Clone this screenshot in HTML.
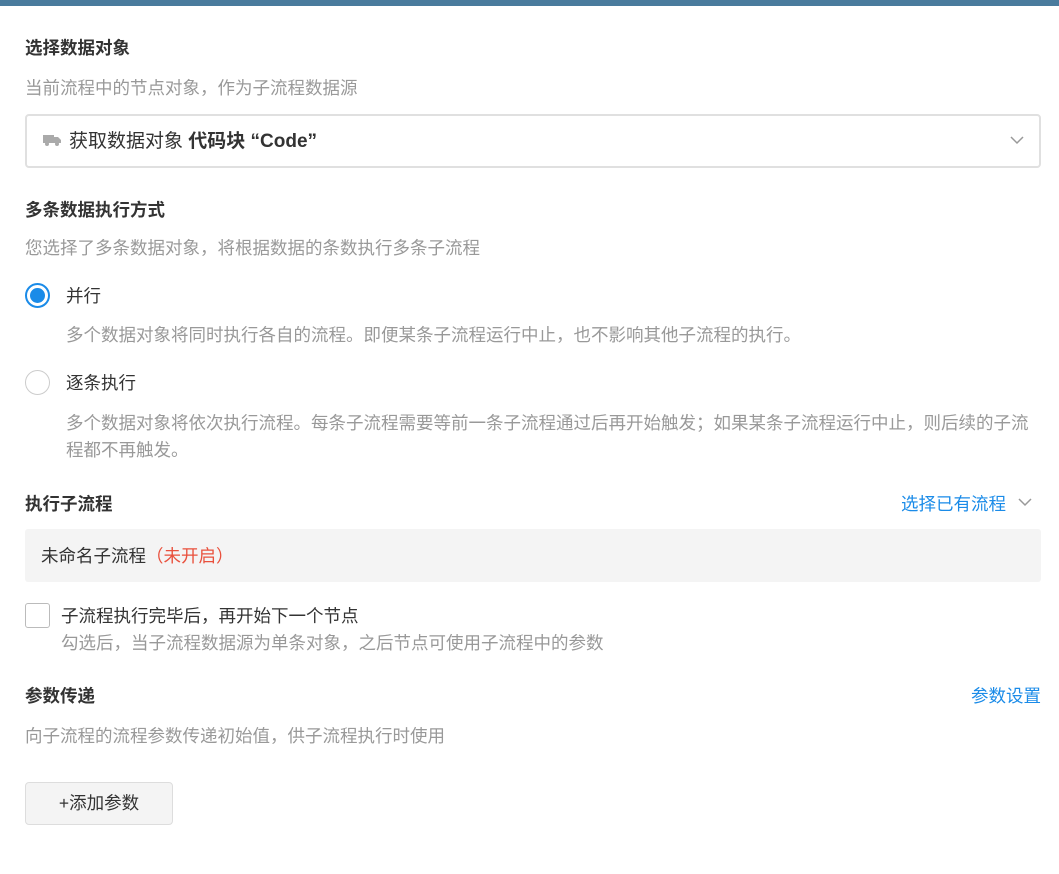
<!DOCTYPE html>
<html><head><meta charset="utf-8"><style>
*{margin:0;padding:0;box-sizing:border-box}
body{width:1059px;height:874px;background:#fff;font-family:"Liberation Sans","Noto Sans CJK SC",sans-serif;position:relative;overflow:hidden;color:#333}
.bar{position:absolute;left:0;top:0;width:1059px;height:6px;background:#4a7b9d}
.a{position:absolute;white-space:nowrap;line-height:20px}
.h{font-size:17.5px;font-weight:bold;color:#333}
.g{font-size:17.5px;color:#999}
.t{font-size:17.5px;color:#333}
.blue{color:#1a8be8}
</style></head><body>
<div class="bar"></div>
<div class="a h" style="left:25px;top:38px">选择数据对象</div>
<div class="a g" style="left:25px;top:78px">当前流程中的节点对象，作为子流程数据源</div>
<div class="a" style="left:25px;top:114px;width:1016px;height:54px;border:2px solid #e0e0e0;border-radius:4px"></div>
<svg class="a" style="left:43px;top:133px" width="18" height="14" viewBox="0 0 18 14"><rect x="0" y="2" width="11" height="8" fill="#aaa"/><path d="M11 4h4l3 3v3h-7z" fill="#aaa"/><circle cx="4" cy="11" r="2" fill="#aaa"/><circle cx="14" cy="11" r="2" fill="#aaa"/></svg>
<div class="a" style="left:69px;top:132px;font-size:19px;color:#333">获取数据对象 <b>代码块 “Code”</b></div>
<svg class="a" style="left:1010px;top:135px" width="14" height="10"><path d="M1 2l6 6 6-6" stroke="#999" stroke-width="1.5" fill="none"/></svg>
<div class="a h" style="left:25px;top:200px">多条数据执行方式</div>
<div class="a g" style="left:25px;top:238px">您选择了多条数据对象，将根据数据的条数执行多条子流程</div>
<div class="a" style="left:25px;top:283px;width:25px;height:25px;border:2px solid #1a8be8;border-radius:50%"><div style="position:absolute;left:3px;top:3px;width:15px;height:15px;border-radius:50%;background:#1a8be8"></div></div>
<div class="a t" style="left:66px;top:286px">并行</div>
<div class="a g" style="left:66px;top:325px">多个数据对象将同时执行各自的流程。即便某条子流程运行中止，也不影响其他子流程的执行。</div>
<div class="a" style="left:25px;top:370px;width:25px;height:25px;border:1px solid #ccc;border-radius:50%"></div>
<div class="a t" style="left:66px;top:373px">逐条执行</div>
<div class="a g" style="left:66px;top:410px;line-height:27px">多个数据对象将依次执行流程。每条子流程需要等前一条子流程通过后再开始触发；如果某条子流程运行中止，则后续的子流<br>程都不再触发。</div>
<div class="a h" style="left:25px;top:494px">执行子流程</div>
<div class="a blue" style="left:901px;top:494px;font-size:17.5px">选择已有流程</div>
<svg class="a" style="left:1018px;top:497px" width="14" height="10"><path d="M1 2l6 6 6-6" stroke="#999" stroke-width="1.5" fill="none"/></svg>
<div class="a" style="left:25px;top:529px;width:1016px;height:53px;background:#f4f4f4;border-radius:3px"></div>
<div class="a t" style="left:41px;top:546px">未命名子流程<span style="color:#e9503c">（未开启）</span></div>
<div class="a" style="left:25px;top:603px;width:25px;height:25px;border:1px solid #bbb;border-radius:3px"></div>
<div class="a t" style="left:61px;top:606px">子流程执行完毕后，再开始下一个节点</div>
<div class="a g" style="left:61px;top:633px">勾选后，当子流程数据源为单条对象，之后节点可使用子流程中的参数</div>
<div class="a h" style="left:25px;top:686px">参数传递</div>
<div class="a blue" style="left:971px;top:686px;font-size:17.5px">参数设置</div>
<div class="a g" style="left:25px;top:726px">向子流程的流程参数传递初始值，供子流程执行时使用</div>
<div class="a" style="left:25px;top:782px;width:148px;height:43px;background:#f4f4f4;border:1px solid #ddd;border-radius:4px;font-size:17.5px;color:#333;text-align:center;line-height:41px">+添加参数</div>
</body></html>
